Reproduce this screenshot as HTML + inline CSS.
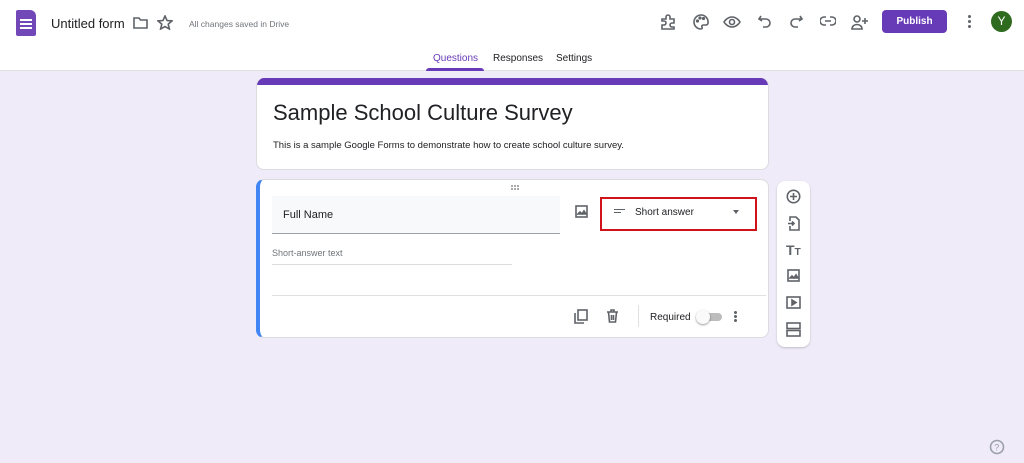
<!DOCTYPE html><html><head><style>
*{box-sizing:border-box;margin:0;padding:0}
body{width:1024px;height:463px;overflow:hidden;background:#f0ebf8;font-family:"Liberation Sans",Arial,sans-serif;position:relative;color:#202124}
.abs{position:absolute}
.hdr{position:absolute;left:0;top:0;width:1024px;height:71px;background:#fff;border-bottom:1px solid #e0e0e0}
svg{position:absolute;fill:none;stroke:#5f6368;stroke-width:1.6}
.card{position:absolute;background:#fff;border-radius:8px;border:1px solid #dadce0}
</style></head><body>
<div class="hdr">
 <div class="abs" style="left:16px;top:10px;width:20px;height:26px;background:#7248b9;border-radius:2px 6px 2px 2px"></div>
 <div class="abs" style="left:20px;top:19px;width:12px;height:2px;background:#fff;box-shadow:0 4px 0 #fff,0 8px 0 #fff"></div>
 <div class="abs" style="left:51px;top:16px;font-size:13px;color:#202124">Untitled form</div>
 <svg style="left:133px;top:16px" width="15" height="13"><path d="M1 2h5l1.5 2H14v8H1z"/></svg>
 <svg style="left:157px;top:15px" width="16" height="15"><path d="M8 1l2 4.5 5 .4-3.8 3.3 1.2 4.8L8 11.5 3.6 14l1.2-4.8L1 5.9l5-.4z"/></svg>
 <div class="abs" style="left:189px;top:19px;font-size:8.5px;color:#70757a">All changes saved in Drive</div>
 <svg style="left:660px;top:14px" width="16" height="16"><path d="M2 5h4V3a2 2 0 014 0v2h4v4h-2a2 2 0 000 4h2v2H2v-4h2a2 2 0 000-4H2z"/></svg>
 <svg style="left:693px;top:14px" width="16" height="16"><path d="M8 1a7 7 0 100 14c1 0 1.5-1 1-2-.5-1 0-2 1.5-2H13a2 2 0 002-2A7 7 0 008 1z"/><circle cx="4.5" cy="7" r=".8"/><circle cx="7" cy="4" r=".8"/><circle cx="10.5" cy="4.5" r=".8"/></svg>
 <svg style="left:723px;top:15px" width="18" height="14"><path d="M1 7s3-5 8-5 8 5 8 5-3 5-8 5-8-5-8-5z"/><circle cx="9" cy="7" r="2.5"/></svg>
 <svg style="left:758px;top:14px" width="14" height="14"><path d="M3 2L1 5l3 2M1 5h7a4 4 0 010 8H5"/></svg>
 <svg style="left:789px;top:14px" width="14" height="14"><path d="M11 2l2 3-3 2M13 5H6a4 4 0 000 8h3"/></svg>
 <svg style="left:820px;top:15px" width="16" height="12"><path d="M6 2H4a4 4 0 000 8h2M10 2h2a4 4 0 010 8h-2M5 6h6"/></svg>
 <svg style="left:851px;top:14px" width="18" height="16"><circle cx="6" cy="5" r="3"/><path d="M1 15c0-3 2.5-4.5 5-4.5s5 1.5 5 4.5zM14 4v6M11 7h6"/></svg>
 <div class="abs" style="left:882px;top:10px;width:65px;height:23px;background:#673ab7;border-radius:4px;color:#fff;font-size:10px;font-weight:bold;text-align:center;line-height:23px">Publish</div>
 <div class="abs" style="left:968px;top:15px;width:3px;height:3px;background:#5f6368;border-radius:50%;box-shadow:0 5px 0 #5f6368,0 10px 0 #5f6368"></div>
 <div class="abs" style="left:991px;top:11px;width:21px;height:21px;background:#2e6b1e;border-radius:50%;color:#fff;font-size:12px;text-align:center;line-height:21px">Y</div>
 <div class="abs" style="left:433px;top:53px;font-size:10px;color:#673ab7">Questions</div>
 <div class="abs" style="left:426px;top:68px;width:58px;height:3px;background:#673ab7;border-radius:3px 3px 0 0"></div>
 <div class="abs" style="left:493px;top:53px;font-size:10px;color:#202124">Responses</div>
 <div class="abs" style="left:556px;top:53px;font-size:10px;color:#202124">Settings</div>
</div>
<div class="card" style="left:256px;top:78px;width:513px;height:92px;overflow:hidden;border-top:none">
 <div class="abs" style="left:0;top:0;width:513px;height:7px;background:#673ab7"></div>
 <div class="abs" style="left:16px;top:22px;font-size:22px">Sample School Culture Survey</div>
 <div class="abs" style="left:16px;top:62px;font-size:9.5px">This is a sample Google Forms to demonstrate how to create school culture survey.</div>
</div>
<div class="card" style="left:256px;top:179px;width:513px;height:159px;border-left:4px solid #4285f4">
 <div class="abs" style="left:251px;top:5px;width:2px;height:2px;background:#aaa;box-shadow:3px 0 0 #aaa,6px 0 0 #aaa,0 3px 0 #aaa,3px 3px 0 #aaa,6px 3px 0 #aaa"></div>
 <div class="abs" style="left:12px;top:16px;width:288px;height:38px;background:#f8f9fa;border-bottom:1px solid #9aa0a6"></div>
 <div class="abs" style="left:23px;top:29px;font-size:11px">Full Name</div>
 <svg style="left:315px;top:25px" width="13" height="13"><rect x="1" y="1" width="11" height="11"/><path d="M3 9l2-2 2 2 2-3 2 3z" fill="#5f6368"/></svg>
 <div class="abs" style="left:340px;top:17px;width:157px;height:34px;border:2px solid #d0121a"></div>
 <div class="abs" style="left:354px;top:29px;width:11px;height:1.3px;background:#5f6368"></div>
 <div class="abs" style="left:354px;top:32px;width:7px;height:1.3px;background:#5f6368"></div>
 <div class="abs" style="left:375px;top:27px;font-size:10px">Short answer</div>
 <div class="abs" style="left:473px;top:30px;border:3.5px solid transparent;border-top:4px solid #5f6368"></div>
 <div class="abs" style="left:12px;top:68px;font-size:9px;color:#70757a">Short-answer text</div>
 <div class="abs" style="left:12px;top:84px;width:240px;height:1px;background:#dadce0"></div>
 <div class="abs" style="left:12px;top:115px;width:494px;height:1px;background:#e0e0e0"></div>
 <svg style="left:314px;top:129px" width="14" height="15"><rect x="4" y="1" width="9" height="10"/><path d="M1 4v10h9"/></svg>
 <svg style="left:346px;top:129px" width="13" height="14"><path d="M1 3h11M5 3V1h3v2M2.5 3l1 10h6l1-10M5.5 6v5M7.5 6v5"/></svg>
 <div class="abs" style="left:378px;top:125px;width:1px;height:22px;background:#e0e0e0"></div>
 <div class="abs" style="left:390px;top:132px;font-size:10px">Required</div>
 <div class="abs" style="left:440px;top:133px;width:22px;height:8px;background:#bdbdbd;border-radius:4px"></div>
 <div class="abs" style="left:436px;top:130px;width:14px;height:14px;background:#fafafa;border-radius:50%;box-shadow:0 1px 2px rgba(0,0,0,.4)"></div>
 <div class="abs" style="left:474px;top:131px;width:3px;height:3px;background:#5f6368;border-radius:50%;box-shadow:0 4px 0 #5f6368,0 8px 0 #5f6368"></div>
</div>
<div class="card" style="left:777px;top:181px;width:33px;height:166px;border:none;box-shadow:0 1px 2px rgba(0,0,0,.2)">
 <svg style="left:9px;top:8px" width="15" height="15"><circle cx="7.5" cy="7.5" r="6.2"/><path d="M7.5 4v7M4 7.5h7"/></svg>
 <svg style="left:10px;top:35px" width="13" height="15"><path d="M3 5V1h6l3 3v10H3v-4M1 7.5h6M5 5.5l2 2-2 2"/></svg>
 <div class="abs" style="left:9px;top:61px;font-size:14px;font-weight:bold;color:#5f6368">T<span style="font-size:10px">T</span></div>
 <svg style="left:10px;top:88px" width="13" height="13"><rect x="1" y="1" width="11" height="11"/><path d="M3 9l2-2 2 2 2-3 2 3z" fill="#5f6368"/></svg>
 <svg style="left:9px;top:115px" width="15" height="13"><rect x="1" y="1" width="13" height="11"/><path d="M6 4l4 2.5L6 9z" fill="#5f6368"/></svg>
 <svg style="left:9px;top:141px" width="15" height="15"><rect x="1" y="1" width="13" height="5.5"/><rect x="1" y="8.5" width="13" height="5.5"/></svg>
</div>
<svg style="left:989px;top:439px" width="16" height="16"><circle cx="8" cy="8" r="6.5" stroke="#9aa0a6"/><text x="5.2" y="11.5" font-size="9" fill="#9aa0a6" stroke="none" font-family="Liberation Sans">?</text></svg>
</body></html>
